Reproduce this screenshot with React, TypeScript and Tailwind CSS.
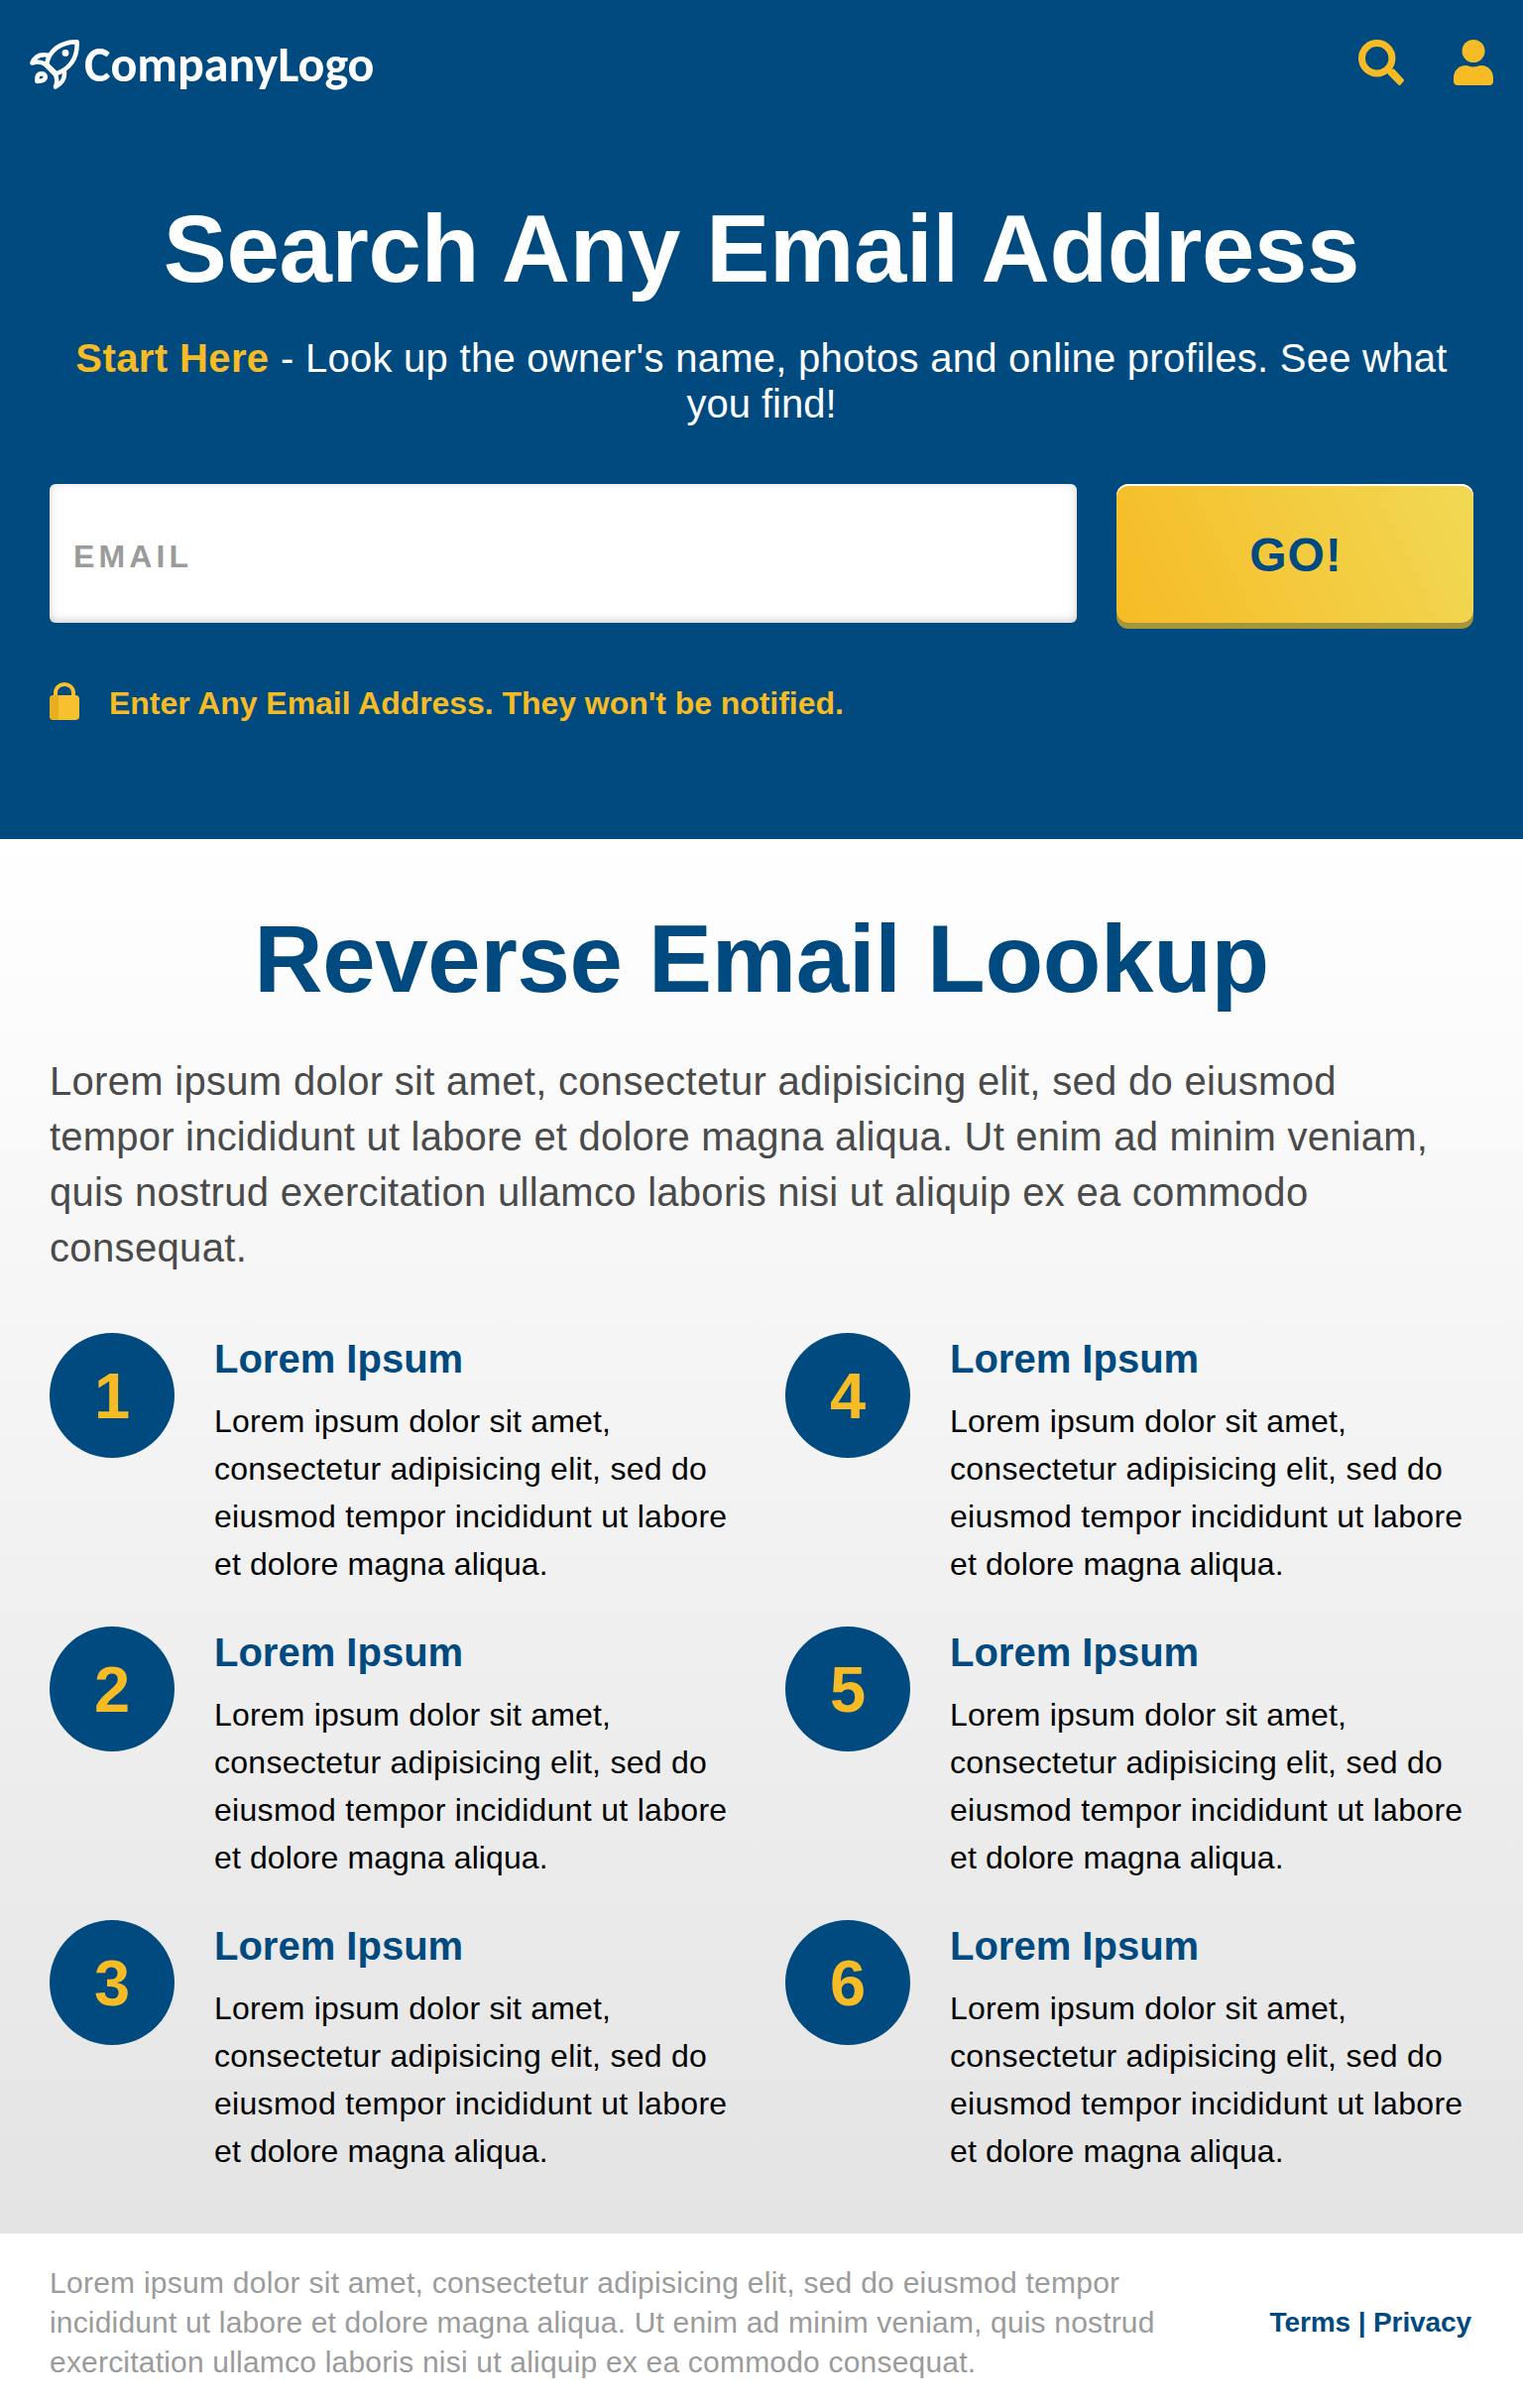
type TextLine = { text: string; tracking: string };

const intro: TextLine[] = [
  { text: "Lorem ipsum dolor sit amet, consectetur adipisicing elit, sed do eiusmod", tracking: "tracking-[0.3px]" },
  { text: "tempor incididunt ut labore et dolore magna aliqua. Ut enim ad minim veniam,", tracking: "tracking-[0.21px]" },
  { text: "quis nostrud exercitation ullamco laboris nisi ut aliquip ex ea commodo", tracking: "tracking-[0.28px]" },
  { text: "consequat.", tracking: "tracking-[0.35px]" },
];

const featureText: TextLine[] = [
  { text: "Lorem ipsum dolor sit amet,", tracking: "tracking-[0.2px]" },
  { text: "consectetur adipisicing elit, sed do", tracking: "tracking-[0.27px]" },
  { text: "eiusmod tempor incididunt ut labore", tracking: "tracking-[0.3px]" },
  { text: "et dolore magna aliqua.", tracking: "tracking-[0.1px]" },
];

const footerText: TextLine[] = [
  { text: "Lorem ipsum dolor sit amet, consectetur adipisicing elit, sed do eiusmod tempor", tracking: "tracking-[0.26px]" },
  { text: "incididunt ut labore et dolore magna aliqua. Ut enim ad minim veniam, quis nostrud", tracking: "tracking-[0.17px]" },
  { text: "exercitation ullamco laboris nisi ut aliquip ex ea commodo consequat.", tracking: "tracking-[0.2px]" },
];

function Lines({ lines }: { lines: TextLine[] }) {
  return (
    <>
      {lines.map((line) => (
        <span key={line.text} className={`block whitespace-nowrap ${line.tracking}`}>
          {line.text}
        </span>
      ))}
    </>
  );
}

function Rocket() {
  return (
    <svg viewBox="0 0 50 50" className="size-[50px] shrink-0" fill="none" stroke="currentColor" strokeWidth="4.5" strokeLinejoin="round" strokeLinecap="round">
      <path d="M17 25.5C19 11 31 2.2 47.6 2.2C48.4 17 42 28.5 26.5 34.5Z" />
      <path d="M19 15.8C10.5 14 5 17 2.4 23.6C7 21.7 12 22.3 16.5 25.3" />
      <path d="M34.8 31.5C36 39 32.5 44 26 47.6C28 43.5 27.6 39.5 25.8 34.5" />
      <path d="M17 25.5L26 34.5" strokeWidth="5.5" />
      <path d="M7.4 42C6.8 37.5 8 34.2 12 34.2C14.8 34.4 16 36 15.8 38.2C15.2 41.4 12 42 7.4 42Z" />
      <circle cx="36" cy="13.4" r="3.4" fill="currentColor" stroke="none" />
    </svg>
  );
}

function SearchIcon() {
  return (
    <svg viewBox="0 0 46 46" className="size-[46px]" fill="none" stroke="currentColor">
      <circle cx="18.7" cy="18.7" r="15.2" strokeWidth="7" />
      <path d="M31.2 34.2L35 30.8L44.5 41L41.4 44.5Z" fill="currentColor" strokeWidth="3" strokeLinejoin="round" />
      <path d="M29 29L33 33" strokeWidth="5" />
    </svg>
  );
}

function UserIcon() {
  return (
    <svg viewBox="0 0 40 46" className="h-[46px] w-10" fill="currentColor">
      <circle cx="20" cy="11.5" r="11.5" />
      <path d="M12 26C15 26 16 27.4 20 27.4S25 26 28 26C35 26 40 31.5 40 38.5V42C40 44.4 38.4 46 36 46H4C1.6 46 0 44.4 0 42V38.5C0 31.5 5 26 12 26Z" />
    </svg>
  );
}

function LockIcon() {
  return (
    <svg viewBox="0 0 30 38" className="h-[38px] w-[30px]">
      <path d="M6 15V10.8C6 5.5 10 2 15 2S24 5.5 24 10.8V15" fill="none" stroke="#f7c02d" strokeWidth="4" />
      <rect y="13" width="30" height="25" rx="4" fill="#f7c02d" />
      <path d="M9 13H4C1.6 13 0 14.6 0 17V34C0 36.4 1.6 38 4 38H9Z" fill="#e9ad20" />
    </svg>
  );
}

function Feature({ number }: { number: number }) {
  return (
    <article className="flex h-[296px] items-start gap-10">
      <div className="flex size-[126px] shrink-0 items-center justify-center rounded-full bg-[#004a7f] text-[65px] leading-none font-bold text-[#f6bb25]">
        {number}
      </div>
      <div className="pt-0.5">
        <h3 className="mb-[15px] text-[40px] leading-[48px] font-bold text-[#004a7f]">Lorem Ipsum</h3>
        <p className="text-[32px] leading-[48px] text-black">
          <Lines lines={featureText} />
        </p>
      </div>
    </article>
  );
}

export default function App() {
  return (
    <div className="flex h-[2428px] w-[1536px] flex-col overflow-hidden bg-white font-['Liberation_Sans',Arial,sans-serif]">
      <div className="h-[846px] shrink-0 bg-[#004a7f]">
        <header className="flex h-[195px] items-start justify-between px-[30px] pt-10 text-[#f6bb25]">
          <div className="flex text-white">
            <Rocket />
            <span className="ml-[5px] text-[50px] leading-[50px] font-bold font-[Carlito,Calibri,Lato,sans-serif]">
              CompanyLogo
            </span>
          </div>
          <nav className="flex gap-[50px]">
            <button aria-label="Search"><SearchIcon /></button>
            <button aria-label="Account"><UserIcon /></button>
          </nav>
        </header>
        <main className="px-[50px]">
          <h1 className="text-center text-[96px] leading-[112px] font-bold tracking-[-0.35px] whitespace-nowrap text-white">
            Search Any Email Address
          </h1>
          <p className="mt-[31px] text-center text-[40px] leading-[46px] text-white">
            <span className="block whitespace-nowrap tracking-[0.27px]">
              <strong className="tracking-[0.4px] text-[#f6bb25]">Start Here</strong> - Look up the owner's name, photos and online profiles. See what
            </span>
            <span className="block">you find!</span>
          </p>
          <form className="mt-[58px] flex gap-10" onSubmit={(e) => e.preventDefault()}>
            <input
              aria-label="Email"
              placeholder="EMAIL"
              className="h-[140px] w-[1036px] rounded-[6px] bg-white pt-1.5 pl-6 text-[32px] font-bold tracking-[4.1px] shadow-[inset_0_-2px_8px_rgba(0,0,0,0.2)] outline-none placeholder:text-[#9b9b9b]"
            />
            <button className="h-[140px] w-[360px] rounded-[12px] bg-[linear-gradient(65deg,#f6bb25,#f1d955)] pt-[3px] pl-0.5 text-[48px] font-bold tracking-[0.9px] text-[#004a7f] shadow-[inset_0_2px_0_#fff,0_6px_0_#a5963b]">
              GO!
            </button>
          </form>
          <div className="mt-[60px] flex gap-[30px] text-[#f6bb25]">
            <LockIcon />
            <p className="mt-px text-[32px] leading-10 font-bold tracking-[-0.05px]">
              Enter Any Email Address. They won't be notified.
            </p>
          </div>
        </main>
      </div>
      <section className="h-[1406px] shrink-0 bg-linear-to-b from-white to-[#e4e4e4] px-[50px] pt-[65px]">
        <h2 className="text-center text-[96px] leading-[112px] font-bold tracking-[-0.3px] text-[#004a7f]">
          Reverse Email Lookup
        </h2>
        <p className="mt-[39px] text-[40px] leading-[56px] text-[#4a4a4a]">
          <Lines lines={intro} />
        </p>
        <div className="mt-[58px] grid grid-flow-col grid-cols-[742px_1fr] grid-rows-3">
          {[1, 2, 3, 4, 5, 6].map((n) => (
            <Feature key={n} number={n} />
          ))}
        </div>
      </section>
      <footer className="flex grow items-center justify-between pt-1 pr-[52px] pl-[50px] text-[#9b9b9b]">
        <p className="text-[30px] leading-10">
          <Lines lines={footerText} />
        </p>
        <p className="text-[28px] leading-10 font-bold tracking-[-0.1px] text-[#004a7f]">
          <a href="#terms">Terms</a> | <a href="#privacy">Privacy</a>
        </p>
      </footer>
    </div>
  );
}
